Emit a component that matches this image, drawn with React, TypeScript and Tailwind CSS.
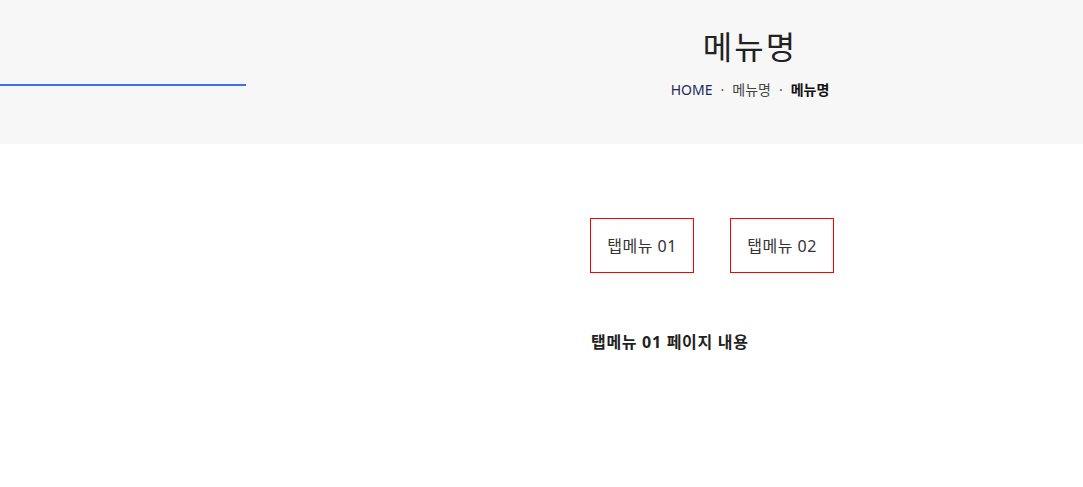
export default function App() {
  const font = { fontFamily: '"Noto Sans", "Noto Sans CJK KR", sans-serif' };
  return (
    <div className="min-h-[487px] bg-white text-[#222]" style={font}>
      {/* sub visual */}
      <div className="relative h-[144px] bg-[#f7f7f7]">
        <div className="absolute left-0 top-[84px] h-[2px] w-[246px] bg-[#3d6ff5]" />
        <div className="ml-[590px] flex w-[320px] flex-col items-center pt-[24px]">
          <h2 className="text-[32px] leading-[46px] font-normal tracking-[2px] text-[#222]">메뉴명</h2>
          <div className="mt-[10px] flex items-center text-[14px] leading-[20px]">
            <span className="text-[#1c2a5a]">HOME</span>
            <span className="mx-[8px] text-[#555]">·</span>
            <span className="text-[#444]">메뉴명</span>
            <span className="mx-[8px] text-[#555]">·</span>
            <span className="font-bold text-[#111]">메뉴명</span>
          </div>
        </div>
      </div>

      {/* content */}
      <div className="ml-[590px] w-[320px] pt-[74px]">
        <ul className="flex gap-[36px]">
          <li className="flex h-[55px] w-[104px] items-center justify-center border border-[#ff0000] text-[16px] tracking-[0.5px] text-[#333]">
            탭메뉴 01
          </li>
          <li className="flex h-[55px] w-[104px] items-center justify-center border border-[#ff0000] text-[16px] tracking-[0.5px] text-[#333]">
            탭메뉴 02
          </li>
        </ul>
        <p className="mt-[57px] pl-[1px] text-[16px] font-bold leading-[24px] tracking-[0.7px] text-[#222]">탭메뉴 01 페이지 내용</p>
      </div>
    </div>
  );
}
